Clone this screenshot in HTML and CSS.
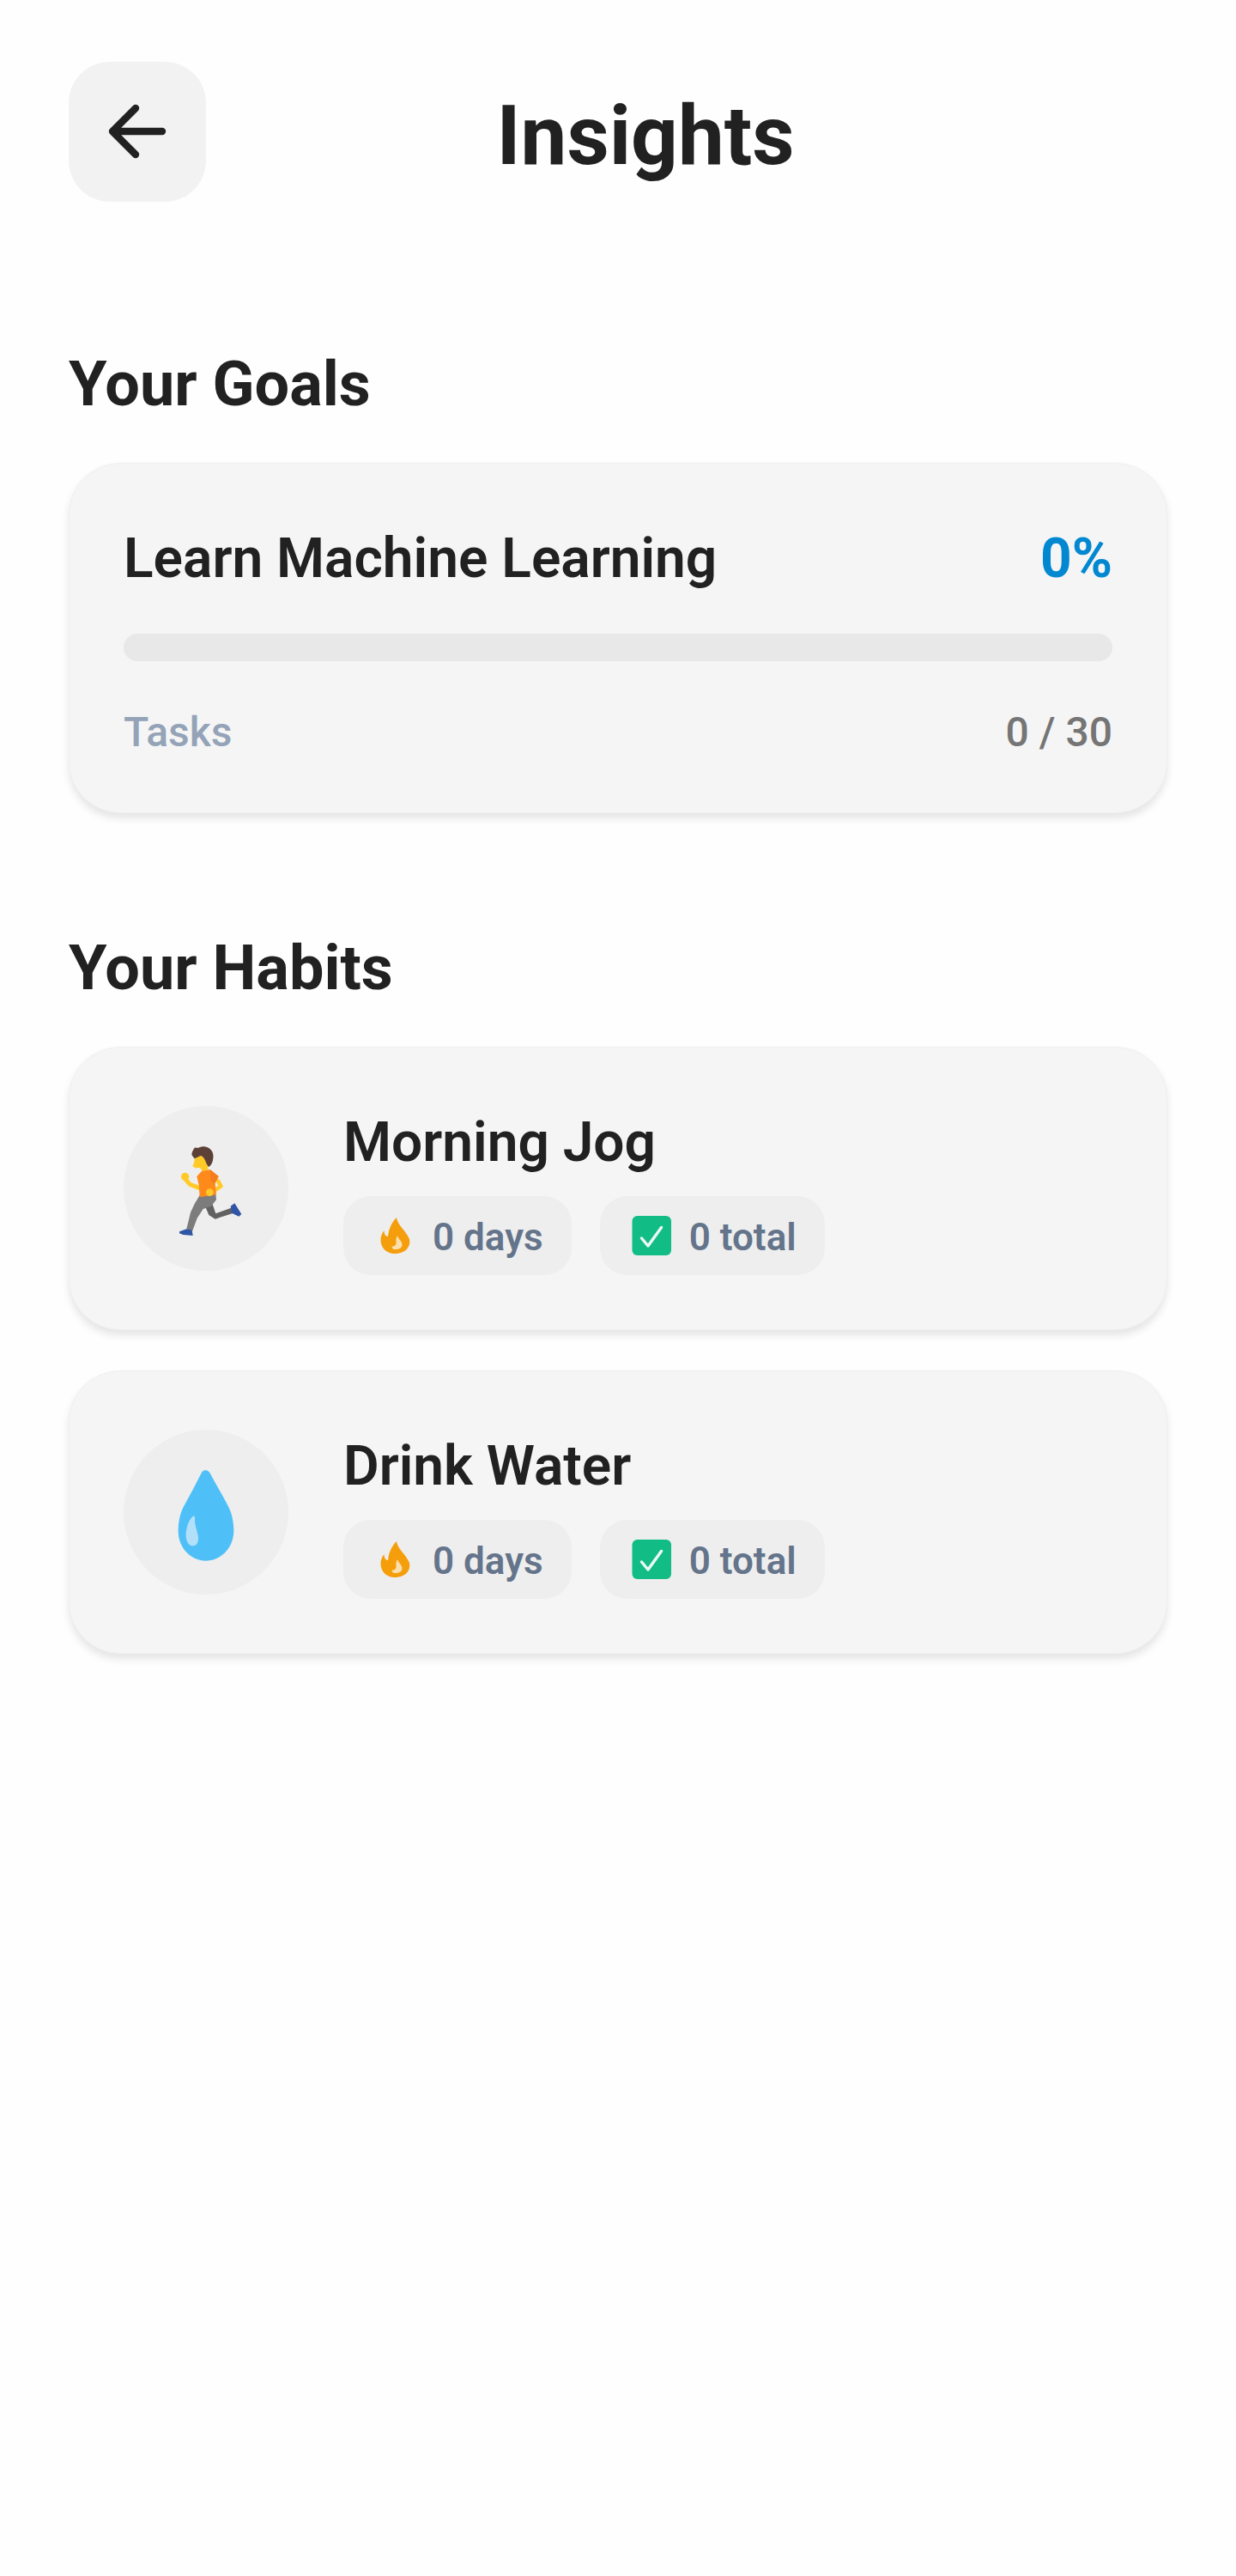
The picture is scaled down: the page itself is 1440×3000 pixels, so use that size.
FILE: index.html
```html
<!DOCTYPE html>
<html lang="en">
<head>
    <meta charset="UTF-8">
    <meta name="viewport" content="width=device-width, initial-scale=1.0">
    <title>Insights</title>
    <link rel="stylesheet" href="styles.css">
</head>
<body>
    <div class="page">
        <header class="top-bar">
            <button class="back-button" type="button" aria-label="Back">
                <svg class="back-icon" viewBox="0 0 100 100">
                    <path d="M79 49H21M48 22 21 49l27 27" fill="none" stroke="#212121" stroke-width="8.4" stroke-linecap="round" stroke-linejoin="round"/>
                </svg>
            </button>
            <h1 class="page-title">Insights</h1>
            <div class="top-spacer"></div>
        </header>

        <section class="goals">
            <h2 class="section-title">Your Goals</h2>
            <div class="card goal-card">
                <div class="goal-head">
                    <span class="goal-name">Learn Machine Learning</span>
                    <span class="goal-percent">0%</span>
                </div>
                <div class="progress-track"></div>
                <div class="goal-meta">
                    <span class="meta-label">Tasks</span>
                    <span class="meta-value">0 / 30</span>
                </div>
            </div>
        </section>

        <section class="habits">
            <h2 class="section-title">Your Habits</h2>

            <div class="card habit-card">
                <div class="habit-icon">
                    <svg class="habit-emoji" viewBox="42 24 576 576">
                        <path d="M345 345 364 400 418 380 426 398 362 419 340 405 322 362Z" fill="#616161"/>
                        <path d="M308 336 364 330 366 352 348 374 320 384 299 416 282 462 262 454 276 396 290 366Z" fill="#7c7c7c"/>
                        <path d="M416 374 430 364 454 402 445 410 420 398Z" fill="#2f55a4"/>
                        <path d="M237 463 262 454 281 458 284 477 250 474 237 469Z" fill="#2f55a4"/>
                        <path d="M306 310 274 298 260 282" fill="none" stroke="#ffca28" stroke-width="15" stroke-linecap="round" stroke-linejoin="round"/>
                        <circle cx="257" cy="271" r="14" fill="#ffca28"/>
                        <path d="M372 286 382 304 350 326" fill="none" stroke="#ffca28" stroke-width="14" stroke-linecap="round" stroke-linejoin="round"/>
                        <path d="M298 270 318 248 345 247 374 270 362 294 366 334 308 342 305 300Z" fill="#ff8a1c"/>
                        <path d="M345 247 374 270 360 296 346 284Z" fill="#f47c20"/>
                        <circle cx="343" cy="326" r="13" fill="#ffca28"/>
                        <path d="M292 203 332 193 338 245 320 252 308 240 293 241 283 234 288 222Z" fill="#ffca28"/>
                        <path d="M280 192C282 182 286 176 290 170 296 168 300 172 304 170 314 164 328 164 338 170 350 176 358 190 355 206 354 218 350 230 340 237 334 232 330 224 328 216 324 208 320 200 312 198 304 200 296 206 290 208 286 202 281 198 280 192Z" fill="#5d4037"/>
                    </svg>
                </div>
                <div class="habit-body">
                    <div class="habit-name">Morning Jog</div>
                    <div class="habit-stats">
                        <div class="stat-chip">
                            <svg class="stat-icon" viewBox="0 0 56 56">
                                <path d="M30 7C31 16 41 22 45 32 47 43 38 49 28 49 18 49 11.5 42 11.5 33 11.5 29 13 25 15.5 22 15.5 26 17 29 20 29 21 20 24 13 30 7Z" fill="#f59e0b"/>
                                <path d="M31 28C32 32 37 35 36.5 39 36 43 32 44 28.5 44 25.5 44 24 42 25 40.5 28.5 41 30 38 29.5 35 29 32 30 30 31 28Z" fill="#fbe0ad"/>
                            </svg>
                            <span class="stat-text">0 days</span>
                        </div>
                        <div class="stat-chip">
                            <svg class="stat-icon" viewBox="0 0 56 56">
                                <rect x="5.5" y="5" width="45.5" height="46" rx="6" fill="#12bc85"/>
                                <path d="M16.5 31 24 40 39.5 18.5" fill="none" stroke="#eafaf4" stroke-width="3.4" stroke-linecap="round" stroke-linejoin="round"/>
                            </svg>
                            <span class="stat-text">0 total</span>
                        </div>
                    </div>
                </div>
            </div>

            <div class="card habit-card">
                <div class="habit-icon">
                    <svg class="habit-emoji" viewBox="42 18 576 576">
                        <path d="M328 160C336 160 342 165 346 173 364 208 394 258 410 290 420 310 427 340 427 372 427 430 382 476 330 476 276 476 233 430 233 372 233 340 240 310 250 290 268 258 294 208 312 173 316 165 320 160 328 160Z" fill="#4fc0f7"/>
                        <path d="M285 320C291 318 292 324 291 332 290 345 296 362 302 388 306 408 298 424 284 424 268 424 258 404 260 380 262 355 272 330 285 320Z" fill="#b3e0f9"/>
                    </svg>
                </div>
                <div class="habit-body">
                    <div class="habit-name">Drink Water</div>
                    <div class="habit-stats">
                        <div class="stat-chip">
                            <svg class="stat-icon" viewBox="0 0 56 56">
                                <path d="M30 7C31 16 41 22 45 32 47 43 38 49 28 49 18 49 11.5 42 11.5 33 11.5 29 13 25 15.5 22 15.5 26 17 29 20 29 21 20 24 13 30 7Z" fill="#f59e0b"/>
                                <path d="M31 28C32 32 37 35 36.5 39 36 43 32 44 28.5 44 25.5 44 24 42 25 40.5 28.5 41 30 38 29.5 35 29 32 30 30 31 28Z" fill="#fbe0ad"/>
                            </svg>
                            <span class="stat-text">0 days</span>
                        </div>
                        <div class="stat-chip">
                            <svg class="stat-icon" viewBox="0 0 56 56">
                                <rect x="5.5" y="5" width="45.5" height="46" rx="6" fill="#12bc85"/>
                                <path d="M16.5 31 24 40 39.5 18.5" fill="none" stroke="#eafaf4" stroke-width="3.4" stroke-linecap="round" stroke-linejoin="round"/>
                            </svg>
                            <span class="stat-text">0 total</span>
                        </div>
                    </div>
                </div>
            </div>
        </section>
    </div>
</body>
</html>
```

FILE: styles.css
```css
body {
    margin: 0;
    background-color: #fefefe;
    color: #212121;
    font-family: Roboto, "Liberation Sans", sans-serif;
}

.page {
    padding: 72px 80px 0;
}

.top-bar {
    display: flex;
    align-items: center;
    justify-content: space-between;
}

.back-button {
    display: flex;
    align-items: center;
    justify-content: center;
    width: 160px;
    height: 163px;
    padding: 0;
    border: 0;
    border-radius: 48px;
    background-color: #f2f2f2;
}

.back-icon {
    width: 100px;
    height: 100px;
}

.page-title {
    margin: 8px 0 0;
    font-size: 96px;
    font-weight: 700;
    line-height: 120px;
}

.top-spacer {
    width: 96px;
}

.goals {
    margin-top: 170px;
}

.habits {
    margin-top: 138px;
}

.section-title {
    margin: 0 0 48px;
    font-size: 72px;
    font-weight: 700;
    line-height: 86px;
}

.card {
    box-sizing: border-box;
    padding: 63px;
    border: 1px solid #f0f0f0;
    border-radius: 60px;
    background-color: #f5f5f5;
    box-shadow: 0 6px 10px rgba(0, 0, 0, 0.1);
}

.goal-head {
    display: flex;
    justify-content: space-between;
    line-height: 96px;
    font-size: 64px;
}

.goal-name {
    font-weight: 600;
}

.goal-percent {
    color: #0288d1;
    font-weight: 700;
}

.progress-track {
    height: 32px;
    margin-top: 39px;
    border-radius: 16px;
    background-color: #e8e8e8;
}

.goal-meta {
    display: flex;
    justify-content: space-between;
    margin-top: 53px;
    font-size: 48px;
    line-height: 60px;
}

.meta-label {
    color: #94a3b8;
    font-weight: 500;
}

.meta-value {
    color: #757575;
    font-weight: 500;
}

.habit-card {
    display: flex;
    align-items: center;
    gap: 64px;
    margin-bottom: 47px;
}

.habit-icon {
    flex: none;
    width: 192px;
    height: 192px;
    border-radius: 50%;
    background-color: #eeeeee;
}

.habit-emoji {
    display: block;
    width: 192px;
    height: 192px;
}

.habit-name {
    font-size: 64px;
    font-weight: 600;
    line-height: 96px;
}

.habit-stats {
    display: flex;
    gap: 33px;
    margin-top: 14px;
}

.stat-chip {
    display: flex;
    align-items: center;
    gap: 16px;
    height: 92px;
    padding: 0 33px 0 32px;
    border-radius: 32px;
    background-color: #eeeeee;
    color: #64748b;
    font-size: 44px;
    font-weight: 600;
}

.stat-text {
    padding-top: 4px;
}

.stat-icon {
    flex: none;
    width: 56px;
    height: 56px;
}
```
